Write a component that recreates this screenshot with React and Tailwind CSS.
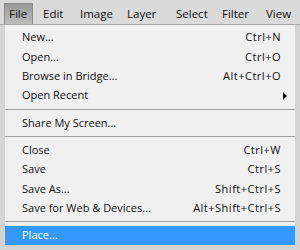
import React from "react";

const bar = [
  { name: "Edit", w: "w-[37px]" },
  { name: "Image", w: "w-[47px]" },
  { name: "Layer", w: "w-[49px]" },
  { name: "Select", w: "w-[46px]" },
  { name: "Filter", w: "w-[44px]" },
  { name: "View", w: "w-[30px]" },
];

const items = [
  { label: "New...", key: "Ctrl+N" },
  { label: "Open...", key: "Ctrl+O" },
  { label: "Browse in Bridge...", key: "Alt+Ctrl+O" },
  { label: "Open Recent", sub: true },
  { sep: true },
  { label: "Share My Screen..." },
  { sep: true },
  { label: "Close", key: "Ctrl+W" },
  { label: "Save", key: "Ctrl+S" },
  { label: "Save As...", key: "Shift+Ctrl+S" },
  { label: "Save for Web & Devices...", key: "Alt+Shift+Ctrl+S" },
  { sep: true },
  { label: "Place...", active: true },
];

const App = () => {
  return (
    <div
      className="w-[300px] h-[250px] bg-[#d4d4d4] text-[11px] text-[#111] overflow-hidden"
      style={{ fontFamily: '"Open Sans", "Liberation Sans", sans-serif' }}
    >
      <div className="h-[25px] bg-[#dadada] border-b border-[#a8a8a8] flex items-end pl-1 text-[11.5px]">
        <div className="h-[21px] w-[29px] pl-[4px] flex items-center bg-gradient-to-b from-[#9a9a9a] to-[#bdbdbd] border border-[#8a8a8a] border-b-0">
          File
        </div>
        <div className="flex pl-[10px]">
          {bar.map((b) => (
            <div key={b.name} className={"h-[21px] flex items-center shrink-0 " + b.w}>
              {b.name}
            </div>
          ))}
        </div>
      </div>
      <div className="ml-[5px] w-[290px] h-[220px] bg-[#f0f0f0] pt-[3px] flex flex-col">
        {items.map((it, i) =>
          it.sep ? (
            <div key={i} className="h-2 flex items-center">
              <div className="w-full h-px bg-[#a0a0a0]" />
            </div>
          ) : (
            <div
              key={i}
              className={
                it.active
                  ? "h-[19.5px] flex items-center pl-[17px] pr-[14px] bg-[#3399ff] text-white"
                  : "h-[19.5px] flex items-center pl-[17px] pr-[14px]"
              }
            >
              <span className="flex-1">{it.label}</span>
              {it.key && <span className="tracking-[0.5px]">{it.key}</span>}
              {it.sub && (
                <svg width="5" height="8" viewBox="0 0 5 8" className="-mr-[7px]">
                  <path d="M0 0 L4 4 L0 8 Z" fill="#000" />
                </svg>
              )}
            </div>
          )
        )}
      </div>
    </div>
  );
};

export default App;
